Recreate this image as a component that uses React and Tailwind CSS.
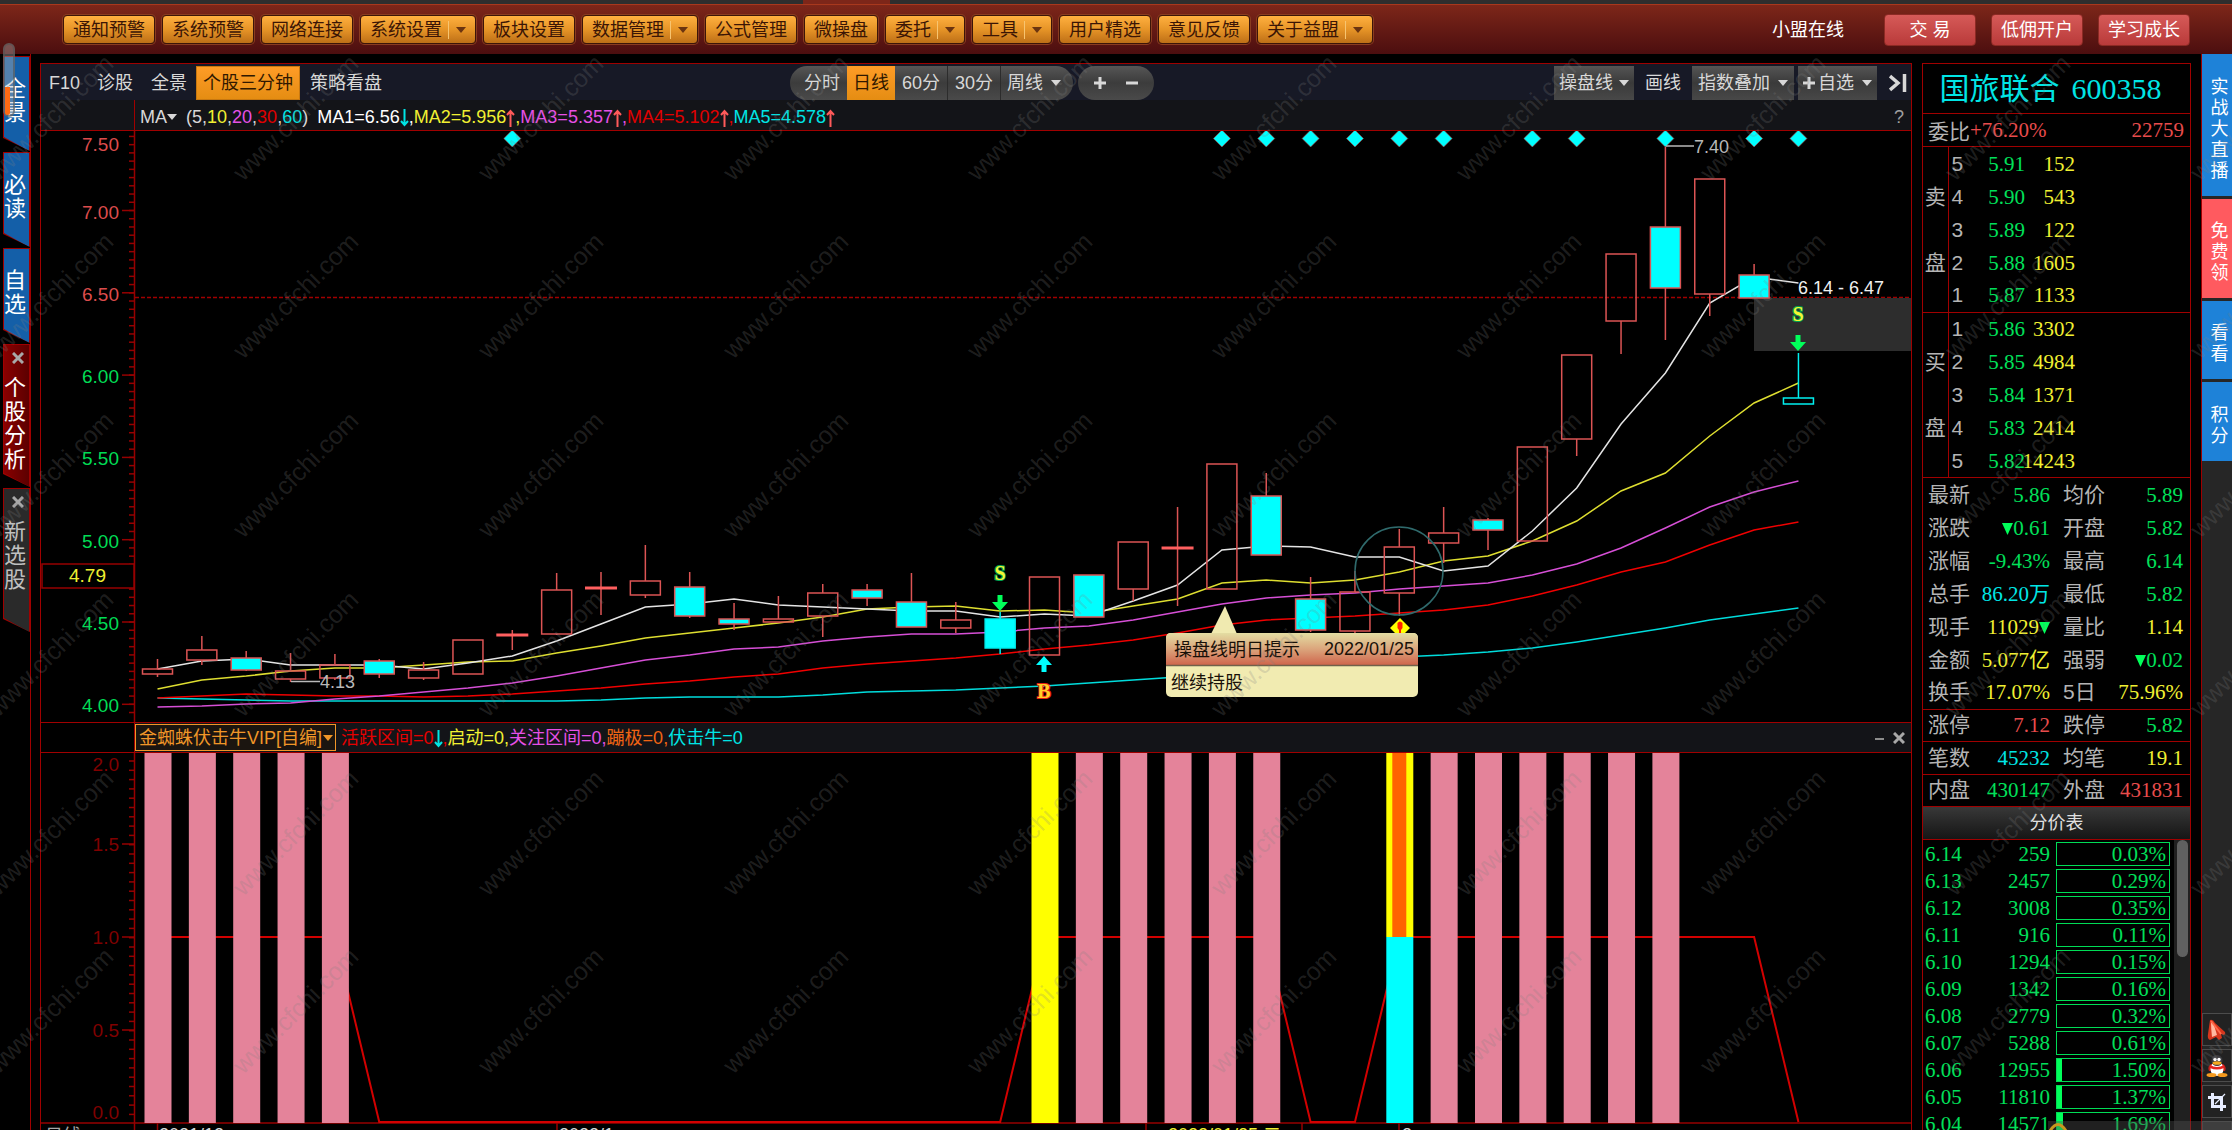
import { Fragment } from 'react'

const menuItems = [
    { label: '通知预警' },
    { label: '系统预警' },
    { label: '网络连接' },
    { label: '系统设置', menu: true },
    { label: '板块设置' },
    { label: '数据管理', menu: true },
    { label: '公式管理' },
    { label: '微操盘' },
    { label: '委托', menu: true },
    { label: '工具', menu: true },
    { label: '用户精选' },
    { label: '意见反馈' },
    { label: '关于益盟', menu: true },
]

const asks = [
    ['', '5', '5.91', '152'],
    ['卖', '4', '5.90', '543'],
    ['', '3', '5.89', '122'],
    ['盘', '2', '5.88', '1605'],
    ['', '1', '5.87', '1133'],
]

const bids = [
    ['', '1', '5.86', '3302'],
    ['买', '2', '5.85', '4984'],
    ['', '3', '5.84', '1371'],
    ['盘', '4', '5.83', '2414'],
    ['', '5', '5.82', '14243'],
]

const G = 'text-[#00e05a]'
const Y = 'text-[#f0f032]'
const C = 'text-[#00e5e5]'
const R = 'text-[#e84c4c]'

// Each group is separated by a red rule
const statGroups = [
    [
        ['最新', '5.86', G, '均价', '5.89', G],
        ['涨跌', '▼0.61', G, '开盘', '5.82', G],
        ['涨幅', '-9.43%', G, '最高', '6.14', G],
        ['总手', '86.20万', C, '最低', '5.82', G],
        ['现手', '11029▼', Y, '量比', '1.14', Y],
        ['金额', '5.077亿', Y, '强弱', '▼0.02', G],
        ['换手', '17.07%', Y, '5日', '75.96%', Y],
    ],
    [['涨停', '7.12', R, '跌停', '5.82', G]],
    [['笔数', '45232', C, '均笔', '19.1', Y]],
    [['内盘', '430147', G, '外盘', '431831', R]],
]

const priceLevels = [
    ['6.14', 259, 0.03],
    ['6.13', 2457, 0.29],
    ['6.12', 3008, 0.35],
    ['6.11', 916, 0.11],
    ['6.10', 1294, 0.15],
    ['6.09', 1342, 0.16],
    ['6.08', 2779, 0.32],
    ['6.07', 5288, 0.61],
    ['6.06', 12955, 1.5],
    ['6.05', 11810, 1.37],
    ['6.04', 14571, 1.69],
]

// [type, bodyTop, bodyBottom, high, low]
// u = up, d = down, x = cross, s = down with cyan wick, e = hollow with cyan wick
const candles = [
    ['u', 669, 674, 659, 677],
    ['u', 650, 660, 636, 665],
    ['d', 658, 670, 651, 671],
    ['u', 671, 679, 653, 682],
    ['u', 665, 678, 654, 680],
    ['d', 661, 674, 659, 678],
    ['u', 670, 678, 662, 680],
    ['u', 640, 674, 640, 674],
    ['x', 635, 635, 630, 650],
    ['u', 590, 634, 573, 635],
    ['x', 588, 588, 572, 615],
    ['u', 581, 595, 545, 598],
    ['d', 587, 616, 572, 618],
    ['d', 619, 624, 603, 630],
    ['u', 619, 622, 596, 623],
    ['u', 593, 616, 584, 637],
    ['d', 590, 598, 584, 606],
    ['d', 602, 627, 573, 627],
    ['u', 620, 628, 602, 633],
    ['s', 619, 648, 612, 654],
    ['u', 577, 655, 577, 655],
    ['d', 575, 617, 575, 617],
    ['u', 542, 589, 542, 601],
    ['x', 548, 548, 507, 606],
    ['u', 464, 589, 464, 589],
    ['d', 496, 555, 473, 555],
    ['d', 599, 630, 577, 632],
    ['u', 592, 631, 571, 633],
    ['u', 547, 593, 529, 616],
    ['u', 533, 543, 507, 563],
    ['d', 520, 530, 518, 550],
    ['u', 447, 541, 447, 541],
    ['u', 355, 439, 355, 456],
    ['u', 254, 321, 254, 354],
    ['d', 227, 288, 147, 340],
    ['u', 179, 294, 179, 316],
    ['d', 275, 298, 264, 298],
    ['e', 398, 404, 353, 398],
]

const averages = [
    {
        color: '#00dcdc',
        ys: [698, 699, 700, 701, 701, 701, 701, 701, 701, 701, 700, 698, 697, 697, 697, 695, 692, 691, 690, 688, 686, 683, 680, 677, 673, 669, 665, 661, 657, 655, 652, 648, 642, 635, 628, 620, 614, 608],
    },
    {
        color: '#f00000',
        ys: [698, 696, 694, 695, 696, 696, 697, 696, 694, 691, 688, 684, 681, 677, 674, 668, 664, 661, 658, 654, 649, 645, 640, 633, 625, 620, 618, 616, 613, 610, 605, 596, 585, 572, 562, 545, 530, 522],
    },
    {
        color: '#d64fd6',
        ys: [707, 706, 704, 703, 699, 696, 692, 688, 683, 676, 668, 660, 655, 649, 647, 641, 637, 634, 634, 632, 628, 626, 620, 612, 604, 598, 595, 593, 589, 586, 583, 575, 564, 548, 528, 507, 492, 481],
    },
    {
        color: '#dede30',
        ys: [689, 680, 676, 671, 668, 668, 665, 662, 661, 653, 646, 638, 633, 628, 623, 617, 609, 607, 606, 611, 610, 613, 606, 599, 583, 580, 583, 580, 572, 561, 556, 541, 521, 491, 473, 436, 403, 383],
    },
    {
        color: '#e4e4e4',
        ys: [669, 661, 659, 665, 665, 665, 669, 663, 656, 641, 624, 607, 604, 599, 605, 607, 609, 611, 611, 617, 614, 616, 601, 585, 550, 546, 547, 557, 557, 571, 566, 531, 488, 424, 373, 303, 277, 283],
    },
]

const diamonds = [8, 24, 25, 26, 27, 28, 29, 31, 32, 34, 36, 37]
const pinkBars = [0, 1, 2, 3, 4, 21, 22, 23, 24, 25, 29, 30, 31, 32, 33, 34]
const zeroAt = (i) => (i >= 5 && i <= 19) || i === 26 || i === 27 || i === 37

const cx = (i) => 157.5 + i * 44.35

const Caret = ({ className = '' }) => (
    <svg viewBox="0 0 10 6" className={`inline-block w-[10px] h-[6px] fill-current ${className}`}>
        <path d="M0 0H10L5 6Z" />
    </svg>
)

const TopBar = () => (
    <header>
        <div className="h-1 bg-[#2e2e2e] flex">
            <span className="ml-[803px] w-[87px] bg-[#7d2619]" />
        </div>
        <div className="h-[50px] border-t border-[#a8381d] bg-gradient-to-b from-[#7d2619] to-[#4c0e0f] flex items-center pl-[63px] pr-[42px]">
            <nav className="flex gap-[7px]">
                {menuItems.map((m) => (
                    <button
                        key={m.label}
                        className="h-[29px] px-[9px] flex items-center rounded-[4px] border border-[#3c1508] bg-gradient-to-b from-[#ffb03f] via-[#e69427] to-[#bd6f17] text-[#3b1505] whitespace-nowrap shadow-[0_0_0_1px_#8a3c20]"
                    >
                        {m.label}
                        {m.menu && (
                            <span className="flex items-center ml-[6px] pl-[7px] h-[18px] border-l border-[#f7c470]">
                                <Caret className="text-[#6b3410]" />
                            </span>
                        )}
                    </button>
                ))}
            </nav>
            <div className="ml-auto flex items-center gap-[15px] text-white">
                <a href="#online" className="mr-[25px]">小盟在线</a>
                {['交 易', '低佣开户', '学习成长'].map((t) => (
                    <button
                        key={t}
                        className="w-[92px] h-8 rounded-[4px] border border-[#8c2a24] bg-gradient-to-b from-[#d65a58] to-[#b93a3a] whitespace-nowrap"
                    >
                        {t}
                    </button>
                ))}
            </div>
        </div>
    </header>
)

const SideTab = ({ text, close, outer, fill }) => (
    <div className={`pl-px pt-px pr-px bg-[#a00000] [clip-path:polygon(0_0,100%_0,100%_100%,0_calc(100%-13px))] ${outer}`}>
        <div className={`h-full flex flex-col items-center pr-[3px] [clip-path:polygon(0_0,100%_0,100%_100%,0_calc(100%-14px))] text-[22px] leading-6 ${close ? 'pt-[3px]' : 'justify-center pb-[6px]'} ${fill}`}>
            {close && (
                <button aria-label="关闭" className="self-end mr-[2px] mb-2 h-5 flex items-center">
                    <svg viewBox="0 0 12 12" className="w-3 h-3 stroke-[#a8a8a8]" strokeWidth="3">
                        <path d="M1 1L11 11M11 1L1 11" />
                    </svg>
                </button>
            )}
            {[...text].map((ch, i) => (
                <span key={i}>{ch}</span>
            ))}
        </div>
    </div>
)

const LeftTabs = () => (
    <aside className="relative w-[31px] shrink-0 pl-[3px] border-r border-[#a00000] flex flex-col gap-px pt-[2px]">
        <SideTab text="全景" outer="h-[95px]" fill="bg-[#145fa8] text-white" />
        <SideTab text="必读" outer="h-[95px]" fill="bg-[#145fa8] text-white" />
        <SideTab text="自选" outer="h-[95px]" fill="bg-[#145fa8] text-white" />
        <SideTab text="个股分析" close outer="h-[143px]" fill="bg-gradient-to-r from-[#8a0000] to-[#5c0000] text-white" />
        <SideTab text="新选股" close outer="h-[144px]" fill="bg-[#2a2a2a] text-[#c0c0c0]" />
        <div className="absolute left-[3px] -top-[11px] w-3 h-[74px] rounded-full border-2 border-[#55555599] bg-[#b4b4b466]">
            <span className="absolute left-0 bottom-0 w-[5px] h-[28px] bg-[#ff6a14] rounded-b" />
        </div>
    </aside>
)

const GrayButton = ({ children, className = '' }) => (
    <button className={`h-[34px] flex items-center whitespace-nowrap ${className}`}>{children}</button>
)

const ChartToolbar = () => (
    <div className="h-9 pt-[2px] grid grid-cols-[1fr_auto_1fr] items-center bg-[#171926] text-[#d8d8d8]">
        <div className="flex items-center pl-2">
            <button className="mr-[17px]">F10</button>
            <button className="mr-[18px]">诊股</button>
            <button className="mr-[9px]">全景</button>
            <button className="h-[34px] px-[6px] bg-gradient-to-b from-[#ff9c26] to-[#e58d12] text-[#301800] border border-[#c87810]">个股三分钟</button>
            <button className="ml-[10px]">策略看盘</button>
        </div>
        <div className="flex gap-[5px] mr-[8px]">
            <div className="flex rounded-full overflow-hidden bg-gradient-to-b from-[#565656] via-[#3c3c3c] to-[#4a4a4a]">
                <GrayButton className="pl-[14px] pr-[7px]">分时</GrayButton>
                <GrayButton className="px-[6px] bg-gradient-to-b from-[#ff9c26] to-[#e58d12] text-[#301800]">日线</GrayButton>
                <GrayButton className="px-[7px] border-r border-[#2c2c2c]">60分</GrayButton>
                <GrayButton className="px-[7px] border-r border-[#2c2c2c]">30分</GrayButton>
                <GrayButton className="pl-[6px] pr-[12px] gap-[8px]">周线<Caret /></GrayButton>
            </div>
            <div className="w-[76px] flex items-center justify-center gap-[18px] rounded-full bg-gradient-to-b from-[#565656] via-[#3c3c3c] to-[#4a4a4a]">
                <button aria-label="放大">
                    <svg viewBox="0 0 14 14" className="w-[14px] h-[14px] stroke-current" strokeWidth="3"><path d="M1 7H13M7 1V13" /></svg>
                </button>
                <button aria-label="缩小">
                    <svg viewBox="0 0 14 14" className="w-[14px] h-[14px] stroke-current" strokeWidth="3"><path d="M1 7H13" /></svg>
                </button>
            </div>
        </div>
        <div className="flex items-center justify-end pr-1">
            <GrayButton className="px-[5px] gap-[6px] bg-gradient-to-b from-[#555] via-[#3a3a3a] to-[#484848]">操盘线<Caret /></GrayButton>
            <GrayButton className="px-[11px]">画线</GrayButton>
            <GrayButton className="px-[6px] gap-[8px] bg-gradient-to-b from-[#555] via-[#3a3a3a] to-[#484848]">指数叠加<Caret /></GrayButton>
            <GrayButton className="ml-1 px-[5px] bg-gradient-to-b from-[#555] via-[#3a3a3a] to-[#484848]">
                <svg viewBox="0 0 12 12" className="w-3 h-3 mr-[3px] stroke-current" strokeWidth="3"><path d="M0 6H12M6 0V12" /></svg>
                自选
                <Caret className="ml-[8px]" />
            </GrayButton>
            <button aria-label="收起" className="ml-[12px]">
                <svg viewBox="0 0 18 18" className="w-[18px] h-[18px] stroke-current fill-none" strokeWidth="3.5">
                    <path d="M1 2L9 9L1 16M15.5 0V18" />
                </svg>
            </button>
        </div>
    </div>
)

const Arrow = ({ up }) => (
    <span className={up ? 'text-[#ff5a5a]' : 'text-[#00e5e5]'}>
        <svg viewBox="0 0 9 18" className="inline-block w-[9px] h-[18px] stroke-current fill-none align-[-4px]" strokeWidth="2">
            {up ? <path d="M4.5 18V2M1 6L4.5 2L8 6" /> : <path d="M4.5 0V16M1 12L4.5 16L8 12" />}
        </svg>
    </span>
)

const AverageLegend = () => (
    <div className="flex h-[31px] border-b border-[#a00000]">
        <div className="w-[94px] bg-[#131418] border-r border-[#a00000]" />
        <div className="flex-1 flex items-center bg-[#131418] pt-[3px] pl-[5px] pr-[7px] whitespace-nowrap text-[#d8d8d8]">
            <button className="flex items-center mr-[9px]">MA<Caret /></button>
            <span className="mr-[9px]">
                (5,<span className={Y}>10</span>,<span className="text-[#e650e6]">20</span>,<span className="text-[#e00000]">30</span>,<span className={C}>60</span>)
            </span>
            <span className="text-white">MA1=6.56<Arrow />,</span>
            <span className={Y}>MA2=5.956<Arrow up />,</span>
            <span className="text-[#e650e6]">MA3=5.357<Arrow up />,</span>
            <span className="text-[#e00000]">MA4=5.102<Arrow up />,</span>
            <span className={C}>MA5=4.578<Arrow up /></span>
            <button aria-label="帮助" className="ml-auto text-[#a0a0a0]">?</button>
        </div>
    </div>
)

const Candle = ({ i, data }) => {
    const [type, top, bottom, high, low] = data
    const x = cx(i)
    const cyan = type === 's' || type === 'e'
    const stroke = cyan ? '#00f0f0' : '#dc5454'
    const solid = type === 'd' || type === 's'
    return (
        <g stroke={stroke} strokeWidth="1.5">
            {high < top && <path d={`M${x} ${high}V${top}`} />}
            {low > bottom && <path d={`M${x} ${bottom}V${low}`} />}
            {type === 'x' ? (
                <path d={`M${x - 16} ${top}H${x + 16}`} stroke="#ff5f5f" strokeWidth="3" />
            ) : (
                <rect x={x - 15} y={top} width="30" height={bottom - top} fill={solid ? '#00ffff' : 'none'} />
            )}
        </g>
    )
}

const Signal = ({ x, y, letter, color, edge }) => (
    <text x={x} y={y} textAnchor="middle" fontSize="20" fontWeight="bold" fill={color} stroke={edge} strokeWidth="2" paintOrder="stroke" fontFamily='"Liberation Serif", serif'>
        {letter}
    </text>
)

// Block arrow whose tip is at x, y; dir is 1 for down and -1 for up
const BlockArrow = ({ x, y, dir, color }) => (
    <path
        d={`M${x} ${y}l8 ${-9 * dir}h-5.5v${-7 * dir}h-5v${7 * dir}h-5.5z`}
        fill={color}
    />
)

const PriceChart = () => {
    const py = (p) => 704.3 - (p - 4) * 164.6
    const ticks = Array.from({ length: 75 }, (_, k) => 3.9 + k * 0.05).filter((p) => py(p) > 136 && py(p) < 716)
    return (
        <svg viewBox="41 131 1870 591" className="block w-full h-auto" fontFamily='"Liberation Sans", "Noto Sans CJK SC", sans-serif' fill="none">
            <defs>
                <linearGradient id="tipHead" x1="0" y1="0" x2="0" y2="1">
                    <stop offset="0" stopColor="#e3dda2" />
                    <stop offset="0.5" stopColor="#dba57c" />
                    <stop offset="1" stopColor="#cf654c" />
                </linearGradient>
            </defs>

            {/* Price axis */}
            <g stroke="#960000" strokeWidth="1.5">
                <path d="M134.5 131V722" />
                {ticks.map((p) => (
                    <path key={p} d={`M129 ${py(p)}H134`} />
                ))}
                {[7, 6.5, 6, 5.5, 5, 4.5, 4].map((p) => (
                    <path key={p} d={`M122 ${py(p)}H134`} />
                ))}
            </g>
            <g fontSize="19" textAnchor="end">
                <text x="119" y="151" fill="#dc4c4c">7.50</text>
                {['7.00', '6.50', '6.00', '5.50', '5.00', '4.50', '4.00'].map((t) => (
                    <text key={t} x="119" y={py(Number(t)) + 8} fill={Number(t) > 6.2 ? '#dc4c4c' : '#00dc55'}>
                        {t}
                    </text>
                ))}
            </g>
            <rect x="42" y="564" width="92" height="24" fill="#000" stroke="#960000" strokeWidth="1.5" />
            <text x="106" y="582" fontSize="19" textAnchor="end" fill="#f0f032">4.79</text>

            <path d="M135 297.5H1911" stroke="#a00000" strokeWidth="1.5" strokeDasharray="4 2" />
            <rect x="1754" y="298" width="157" height="53" fill="#2d2d2d" />

            {averages.map((a) => (
                <polyline
                    key={a.color}
                    points={a.ys.map((y, i) => `${cx(i)},${y}`).join(' ')}
                    stroke={a.color}
                    strokeWidth="1.5"
                />
            ))}
            {candles.map((c, i) => (
                <Candle key={i} i={i} data={c} />
            ))}

            {diamonds.map((i) => (
                <path key={i} d={`M${cx(i)} 130l8.5 8.5l-8.5 8.5l-8.5 -8.5z`} fill="#00ffff" stroke="#b43c3c" strokeWidth="0.6" />
            ))}

            <circle cx="1399" cy="571" r="44" stroke="#2f6a6c" strokeWidth="1.5" />
            <path d="M1400 618l10 10l-10 10l-10 -10z" fill="#ffff00" />
            <path d="M1397.5 623q2.5 -3 5 0v5l-1.500 2v5h-2v-5l-1.500 -2z" fill="#ff2000" />

            <path d="M1666 146H1694M291 681.5H320" stroke="#b8b8b8" strokeWidth="1.5" />
            <g fontSize="18" fill="#b8b8b8">
                <text x="1694" y="153">7.40</text>
                <text x="320" y="688">4.13</text>
                <text x="1798" y="294" fill="#f0f0f0">6.14 - 6.47</text>
            </g>

            {/* Buy and sell signals */}
            <Signal x={1000} y={580} letter="S" color="#f5f532" edge="#00a050" />
            <BlockArrow x={1000} y={611} dir={1} color="#00ff5a" />
            <Signal x={1798} y={321} letter="S" color="#f5f532" edge="#00a050" />
            <BlockArrow x={1798} y={351} dir={1} color="#00ff5a" />
            <BlockArrow x={1044} y={656} dir={-1} color="#00ffff" />
            <Signal x={1044} y={698} letter="B" color="#ffd028" edge="#e61e14" />

            {/* Hint bubble */}
            <path d="M1211 634L1225 606L1237 634Z" fill="#f0eab0" />
            <rect x="1166" y="633" width="252" height="64" rx="5" fill="#f1ebb1" />
            <path d="M1166 665V638Q1166 633 1171 633H1413Q1418 633 1418 638V665Z" fill="url(#tipHead)" />
            <path d="M1166 665.5H1418" stroke="#70604a" strokeWidth="1.5" />
            <g fontSize="18" fill="#181008">
                <text x="1174" y="656">操盘线明日提示</text>
                <text x="1324" y="655">2022/01/25</text>
                <text x="1171" y="689">继续持股</text>
            </g>
        </svg>
    )
}

const IndicatorHeader = () => (
    <div className="flex h-[31px] border-y border-[#a00000] whitespace-nowrap">
        <div className="w-[94px] border-r border-[#a00000]" />
        <div className="flex-1 flex items-center bg-[#131418] pr-[6px]">
            <div className="relative h-[27px] mr-[5px]">
                <select
                    aria-label="指标"
                    className="appearance-none h-full pl-[3px] pr-[12px] border border-[#f09628] bg-[#1b1510] text-[#f09628] leading-[24px]"
                >
                    <option>金蜘蛛伏击牛VIP[自编]</option>
                </select>
                <Caret className="absolute right-[3px] top-[11px] text-[#f09628] pointer-events-none" />
            </div>
            <span className="text-[#e60000]">活跃区间=0<Arrow />,</span>
            <span className={Y}>启动=0,</span>
            <span className="text-[#e650e6]">关注区间=0,</span>
            <span className="text-[#f06414]">蹦极=0,</span>
            <span className={C}>伏击牛=0</span>
            <button aria-label="最小化" className="ml-auto mr-[9px]">
                <svg viewBox="0 0 9 12" className="w-[9px] h-3 stroke-[#8c8c8c]" strokeWidth="2"><path d="M0 7H9" /></svg>
            </button>
            <button aria-label="关闭">
                <svg viewBox="0 0 12 12" className="w-3 h-3 stroke-[#a8a8a8]" strokeWidth="3"><path d="M1 1L11 11M11 1L1 11" /></svg>
            </button>
        </div>
    </div>
)

const IndicatorChart = () => {
    const ticks = Array.from({ length: 39 }, (_, k) => 761 + k * 9.3)
    const line = candles.map((_, i) => `${cx(i)},${zeroAt(i) ? 1122 : 937}`).join(' ')
    return (
        <svg viewBox="41 753 1870 393" className="block w-full h-auto" fontFamily='"Liberation Sans", "Noto Sans CJK SC", sans-serif' fill="none">
            <g stroke="#960000" strokeWidth="1.5">
                <path d="M134.5 753V1146M41 1123H1911M157.5 1123V1146M557 1123V1146M1146 1123V1146M1302 1123V1146M1399 1123V1146" />
                {ticks.map((y) => (
                    <path key={y} d={`M129 ${y}H134`} />
                ))}
                <path d="M122 844H134M122 937H134M122 1030H134" />
            </g>
            <g fontSize="19" textAnchor="end" fill="#800000">
                <text x="119" y="771">2.0</text>
                <text x="119" y="851">1.5</text>
                <text x="119" y="944">1.0</text>
                <text x="119" y="1037">0.5</text>
                <text x="119" y="1119">0.0</text>
            </g>
            <polyline points={line} stroke="#d20000" strokeWidth="2" />
            {pinkBars.map((i) => (
                <rect key={i} x={cx(i) - 13} y="752" width="27" height="371" fill="#e4839a" />
            ))}
            <rect x={cx(20) - 13} y="752" width="27" height="371" fill="#ffff00" />
            <rect x={cx(28) - 13} y="752" width="27" height="185" fill="#ffff00" />
            <rect x={cx(28) - 7} y="752" width="14" height="185" fill="#ff6400" />
            <rect x={cx(28) - 13} y="937" width="27" height="186" fill="#00ffff" />
            <g fontSize="18" fill="#d8d8d8">
                <text x="45" y="1142" fill="#a8a8a8">日线 ▲</text>
                <text x="159" y="1141">2021/12</text>
                <text x="559" y="1141">2022/1</text>
                <text x="1168" y="1141" fill="#f0f032">2022/01/25 二</text>
                <text x="1402" y="1141">2</text>
            </g>
        </svg>
    )
}

const OrderBook = ({ rows }) => (
    <table className="w-full table-fixed border-b border-[#a00000] text-[21px]">
        <colgroup>
            <col className="w-[25px]" />
            <col className="w-[22px]" />
            <col className="w-[55px]" />
            <col className="w-[50px]" />
            <col />
        </colgroup>
        <tbody>
            {rows.map(([side, level, price, volume]) => (
                <tr key={level} className="h-[33px]">
                    <th className="p-0 font-normal text-[#b4b4b4] border-r border-[#a00000] leading-[24px]">{side}</th>
                    <td className="p-0 pl-[3px] text-[#b4b4b4]">{level}</td>
                    <td className={`p-0 text-right font-['Liberation_Serif',serif] ${G}`}>{price}</td>
                    <td className={`p-0 font-['Liberation_Serif',serif] ${Y}`}>
                        <span className="flex justify-end whitespace-nowrap">{volume}</span>
                    </td>
                    <td />
                </tr>
            ))}
        </tbody>
    </table>
)

const Value = ({ text }) =>
    [...text].map((ch, i) =>
        ch === '▼' ? (
            <svg key={i} viewBox="0 0 11 12" className="inline-block w-[11px] h-3 fill-[#00ff5a] align-baseline">
                <path d="M0 0H11L5.5 12Z" />
            </svg>
        ) : (
            <Fragment key={i}>{ch}</Fragment>
        )
    )

const Stats = ({ rows }) => (
    <table className="w-full table-fixed border-b border-[#a00000] text-[21px] whitespace-nowrap">
        <tbody>
            {rows.map(([l1, v1, c1, l2, v2, c2]) => (
                <tr key={l1} className={`leading-[24px] ${rows.length > 1 ? 'h-[33px]' : 'h-8'}`}>
                    <th className="p-0 pl-[5px] w-[52px] font-normal text-left text-[#b4b4b4]">{l1}</th>
                    <td className={`p-0 w-[75px] text-right font-['Liberation_Serif','Noto_Sans_CJK_SC',serif] ${c1}`}><Value text={v1} /></td>
                    <th className="p-0 pl-[13px] w-[60px] font-normal text-left text-[#b4b4b4]">{l2}</th>
                    <td className={`p-0 pr-[7px] text-right font-['Liberation_Serif','Noto_Sans_CJK_SC',serif] ${c2}`}><Value text={v2} /></td>
                </tr>
            ))}
        </tbody>
    </table>
)

const QuotePanel = () => (
    <section className="w-[269px] shrink-0 mt-[9px] border border-b-0 border-[#a00000] overflow-hidden">
        <h1 className="h-[50px] flex items-center justify-center gap-3 pr-[12px] border-b border-[#a00000] text-[30px] whitespace-nowrap text-[#00e5e5]">
            国旅联合 <span className="font-['Liberation_Serif',serif]">600358</span>
        </h1>
        <div className={`h-[33px] flex items-center border-b border-[#a00000] pl-[5px] pr-[6px] text-[21px] font-['Liberation_Serif',serif] ${R}`}>
            <span className="font-['Noto_Sans_CJK_SC',sans-serif] text-[#b4b4b4]">委比</span>
            +76.20%
            <span className="ml-auto">22759</span>
        </div>
        <OrderBook rows={asks} />
        <OrderBook rows={bids} />
        {statGroups.map((rows, i) => (
            <Stats key={i} rows={rows} />
        ))}
        <h2 className="h-[33px] flex items-center justify-center border-b border-[#a00000] bg-gradient-to-b from-[#383838] to-[#161616] text-[#e0e0e0]">分价表</h2>
        <div className="flex">
            <table className={`flex-1 table-fixed text-[21px] font-['Liberation_Serif',serif] ${G}`}>
                <tbody>
                    {priceLevels.map(([price, volume, pct]) => (
                        <tr key={price} className="h-[27px]">
                            <td className="p-0 pl-[2px] w-[48px]">{price}</td>
                            <td className="p-0 w-[79px] text-right">{volume}</td>
                            <td className="p-0 pl-[6px]">
                                <div className="relative h-6 w-[114px] border border-[#00dc55] leading-[22px] pr-[3px] text-right">
                                    <span className="absolute inset-y-0 left-0 bg-[#00ff5a]" style={{ width: pct >= 1 ? `${pct * 3}%` : 0 }} />
                                    {pct.toFixed(2)}%
                                </div>
                            </td>
                        </tr>
                    ))}
                </tbody>
            </table>
            <div className="w-4 bg-[#202020] flex justify-center items-start">
                <span className="w-[11px] h-[117px] rounded-full bg-[#606060]" />
            </div>
        </div>
    </section>
)

const rightTabs = [
    { text: '实战大直播', cls: 'h-[142px] bg-[#1e82d8]' },
    { text: '免费领', cls: 'h-[99px] bg-[#ff5a5f]' },
    { text: '看看', cls: 'h-[78px] bg-[#1e82d8]' },
    { text: '积分', cls: 'h-[79px] bg-[#1e82d8]' },
]

const RightRail = () => (
    <aside className="w-[31px] shrink-0 bg-[#262626] border-l border-[#a00000] flex flex-col">
        <div className="flex flex-col gap-[3px] text-white">
            {rightTabs.map((t) => (
                <button key={t.text} className={`flex flex-col items-center justify-center pl-[5px] pt-[8px] leading-[21px] ${t.cls}`}>
                    {[...t.text].map((ch, i) => (
                        <span key={i}>{ch}</span>
                    ))}
                </button>
            ))}
        </div>
        <div className="mt-[552px] flex flex-col gap-[3px]">
            <button aria-label="公告" className="h-[33px] flex items-center justify-center border border-[#4c4c4c] bg-[#222]">
                <svg viewBox="0 0 20 22" className="w-5 h-[22px]">
                    <path d="M3 1Q6 0 8 4L18 13Q19 15 17 16L14 15L15 19L12 21L9 18L3 21Q0 20 1 15Z" fill="#d8361c" />
                    <path d="M4 3L7 6L10 16L5 18Q4 10 4 3Z" fill="#ffb8a0" />
                    <path d="M4 2L14 15" stroke="#ff6a4a" strokeWidth="2" />
                </svg>
            </button>
            <button aria-label="QQ" className="h-[33px] flex items-center justify-center border border-[#4c4c4c] bg-[#222]">
                <svg viewBox="0 0 22 22" className="w-[22px] h-[22px]">
                    <path d="M3 16Q1 12 5 9L17 9Q21 12 19 16Z" fill="#c8201c" />
                    <ellipse cx="11" cy="14" rx="6.5" ry="7" fill="#fff" />
                    <ellipse cx="11" cy="5.5" rx="5.5" ry="5.5" fill="#3c3c40" />
                    <circle cx="9" cy="4.5" r="1.7" fill="#fff" />
                    <circle cx="13" cy="4.5" r="1.7" fill="#fff" />
                    <ellipse cx="11" cy="8" rx="4.5" ry="1.8" fill="#f5a81e" />
                    <path d="M4 10Q11 14 18 10L18 13Q11 16 4 13Z" fill="#e8231e" />
                    <ellipse cx="5.5" cy="20" rx="5" ry="2" fill="#f59a1e" />
                    <ellipse cx="16.5" cy="20" rx="5" ry="2" fill="#f59a1e" />
                </svg>
            </button>
            <button aria-label="截图" className="h-[33px] flex items-center justify-center border border-[#4c4c4c] bg-[#222]">
                <svg viewBox="0 0 20 20" className="w-5 h-5 fill-none stroke-[#e6ecff]" strokeWidth="3">
                    <path d="M1 5.5H14.5V19M5.5 1V14.5H19" />
                    <path d="M8 12L18 2" strokeWidth="1.2" />
                </svg>
            </button>
            <button aria-label="更多" className="h-[33px] border border-[#4c4c4c] bg-[#333]" />
        </div>
    </aside>
)

// Top edge of the floating bar docked at the lower right
const FloatingBar = () => (
    <div className="absolute bottom-0 right-0 w-[184px] h-[9px] bg-[#50505066]">
        <svg viewBox="0 0 20 8" className="w-5 h-2 mt-px fill-none stroke-[#c8961e]" strokeWidth="3">
            <path d="M2 9Q10 -4 18 9" />
        </svg>
    </div>
)

const Watermark = () => (
    <svg aria-hidden="true" className="absolute inset-0 w-full h-full pointer-events-none">
        {[118, 296, 475, 654, 833, 1011].map((y) =>
            [51, 296, 541, 786, 1030, 1274, 1519, 1763, 2008, 2253].map((x) => (
                <text
                    key={`${x}-${y}`}
                    transform={`translate(${x} ${y}) rotate(-45)`}
                    y="8"
                    textAnchor="middle"
                    fontSize="25"
                    fontFamily='"Liberation Sans", sans-serif'
                    fill="#808080"
                    fillOpacity="0.24"
                >
                    www.cfchi.com
                </text>
            ))
        )}
    </svg>
)

const App = () => (
    <div className="relative h-screen overflow-hidden bg-black flex flex-col text-[18px] leading-[22px] font-['Liberation_Sans','Noto_Sans_CJK_SC',sans-serif]">
        <TopBar />
        <div className="flex-1 min-h-0 flex">
            <LeftTabs />
            <main className="flex-1 min-w-0 ml-[9px] mr-[10px] mt-[9px] border border-b-0 border-[#a00000] overflow-hidden">
                <ChartToolbar />
                <AverageLegend />
                <PriceChart />
                <IndicatorHeader />
                <IndicatorChart />
            </main>
            <QuotePanel />
            <div className="w-[10px] shrink-0" />
            <RightRail />
        </div>
        <FloatingBar />
        <Watermark />
    </div>
)

export default App
